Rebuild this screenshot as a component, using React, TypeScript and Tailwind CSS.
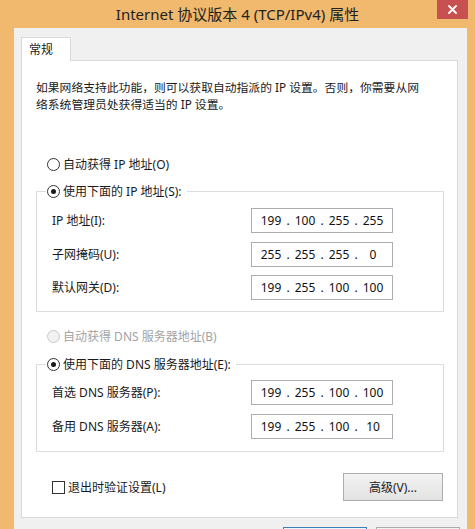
import React, { Fragment } from "react";

function Radio({ checked, disabled }: { checked?: boolean; disabled?: boolean }) {
  return (
    <span
      className={
        disabled
          ? "w-[13px] h-[13px] rounded-full border border-[#c8c8c8] bg-[#f2f2f2] flex items-center justify-center shrink-0"
          : "w-[13px] h-[13px] rounded-full border border-[#333333] bg-white flex items-center justify-center shrink-0"
      }
    >
      {checked && <span className="w-[5px] h-[5px] rounded-full bg-[#1a1a1a]" />}
    </span>
  );
}

function IpField({ parts }: { parts: string[] }) {
  return (
    <div className="w-[142px] h-[25px] border border-[#abadb3] bg-white flex items-center pl-[6px] text-[12px] text-[#111]">
      {parts.map((p, i) => (
        <Fragment key={i}>
          {i > 0 && <span className="w-[8px] text-center">.</span>}
          <span className="w-[26px] text-center">{p}</span>
        </Fragment>
      ))}
    </div>
  );
}

function Row({ label, parts, first, gap8 }: { label: string; parts: string[]; first?: boolean; gap8?: boolean }) {
  return (
    <div className={first ? "flex items-center h-[25px]" : gap8 ? "flex items-center h-[25px] mt-[8px]" : "flex items-center h-[25px] mt-[9px]"}>
      <span className="w-[205px] pl-[6px] whitespace-nowrap">{label}</span>
      <IpField parts={parts} />
    </div>
  );
}

export default function App() {
  return (
    <div className="w-[475px] h-[529px] overflow-hidden bg-[#f0b96e] flex flex-col font-['Noto_Sans','Noto_Sans_CJK_SC',sans-serif] text-[12px] leading-[17px] text-[#1a1a1a]">
      {/* title bar */}
      <div className="h-[28px] shrink-0 grid grid-cols-[1fr_auto_1fr] items-start">
        <div />
        <div className="h-[28px] flex items-center text-[15px] text-[#222] whitespace-nowrap">
          Internet 协议版本 4 (TCP/IPv4) 属性
        </div>
        <div className="flex justify-end pr-[7px]">
          <div className="w-[31px] h-[19px] bg-[#c75050] flex items-center justify-center">
            <svg width="9" height="9" viewBox="0 0 9 9">
              <path d="M1 1L8 8M8 1L1 8" stroke="#ffffff" strokeWidth="1.8" strokeLinecap="round" />
            </svg>
          </div>
        </div>
      </div>

      {/* client area */}
      <div className="flex-1 ml-[14px] mr-[8px] bg-[#f0f0f0] pl-[7px] pr-[7px] pt-[9px] flex flex-col">
        {/* tab */}
        <div className="relative z-10 -mb-px w-[50px] h-[24px] bg-white border border-b-0 border-[#d9d9d9] pl-[7px] flex items-center">
          常规
        </div>
        {/* panel */}
        <div className="w-[437px] h-[458px] shrink-0 bg-white border border-[#d9d9d9] pl-[14px] pr-[13px] pt-[18px] flex flex-col">
          <p className="whitespace-nowrap text-[11.8px]">
            如果网络支持此功能，则可以获取自动指派的 IP 设置。否则，你需要从网
            <br />
            络系统管理员处获得适当的 IP 设置。
          </p>

          <div className="mt-[43px] h-[16px] flex items-center gap-[3px] ml-[11px]">
            <Radio />
            <span>自动获得 IP 地址(O)</span>
          </div>

          <fieldset className="mt-[11px] border border-[#dcdcdc] pl-[9px] pb-[11px]">
            <legend className="pl-[1px] pr-[5px] h-[16px] flex items-center gap-[3px]">
              <Radio checked />
              <span>使用下面的 IP 地址(S):</span>
            </legend>
            <div className="mt-[9px]">
              <Row first label="IP 地址(I):" parts={["199", "100", "255", "255"]} />
              <Row label="子网掩码(U):" parts={["255", "255", "255", "0"]} />
              <Row gap8 label="默认网关(D):" parts={["199", "255", "100", "100"]} />
            </div>
          </fieldset>

          <div className="mt-[16px] h-[16px] flex items-center gap-[3px] ml-[11px] text-[#a3a3a3]">
            <Radio disabled />
            <span>自动获得 DNS 服务器地址(B)</span>
          </div>

          <fieldset className="mt-[12px] border border-[#dcdcdc] pl-[9px] pb-[12px]">
            <legend className="pl-[1px] pr-[5px] h-[16px] flex items-center gap-[3px]">
              <Radio checked />
              <span>使用下面的 DNS 服务器地址(E):</span>
            </legend>
            <div className="mt-[8px]">
              <Row first label="首选 DNS 服务器(P):" parts={["199", "255", "100", "100"]} />
              <Row label="备用 DNS 服务器(A):" parts={["199", "255", "100", "10"]} />
            </div>
          </fieldset>

          <div className="mt-[21px] flex items-center justify-between pr-[1px]">
            <div className="flex items-center gap-[3px] ml-[16px]">
              <span className="w-[13px] h-[13px] border border-[#333333] bg-white shrink-0" />
              <span>退出时验证设置(L)</span>
            </div>
            <div className="w-[100px] h-[28px] border border-[#acacac] bg-gradient-to-b from-[#f2f2f2] to-[#e3e3e3] flex items-center justify-center">
              高级(V)...
            </div>
          </div>
        </div>

        {/* bottom buttons (only their top edges are visible) */}
        <div className="mt-[9px] flex justify-end gap-[9px]">
          <div className="w-[84px] h-[23px] border border-[#3c7fb1] bg-gradient-to-b from-[#eaf6fd] to-[#d9f0fc]" />
          <div className="w-[84px] h-[23px] border border-[#acacac] bg-gradient-to-b from-[#f2f2f2] to-[#e3e3e3]" />
        </div>
      </div>
    </div>
  );
}
